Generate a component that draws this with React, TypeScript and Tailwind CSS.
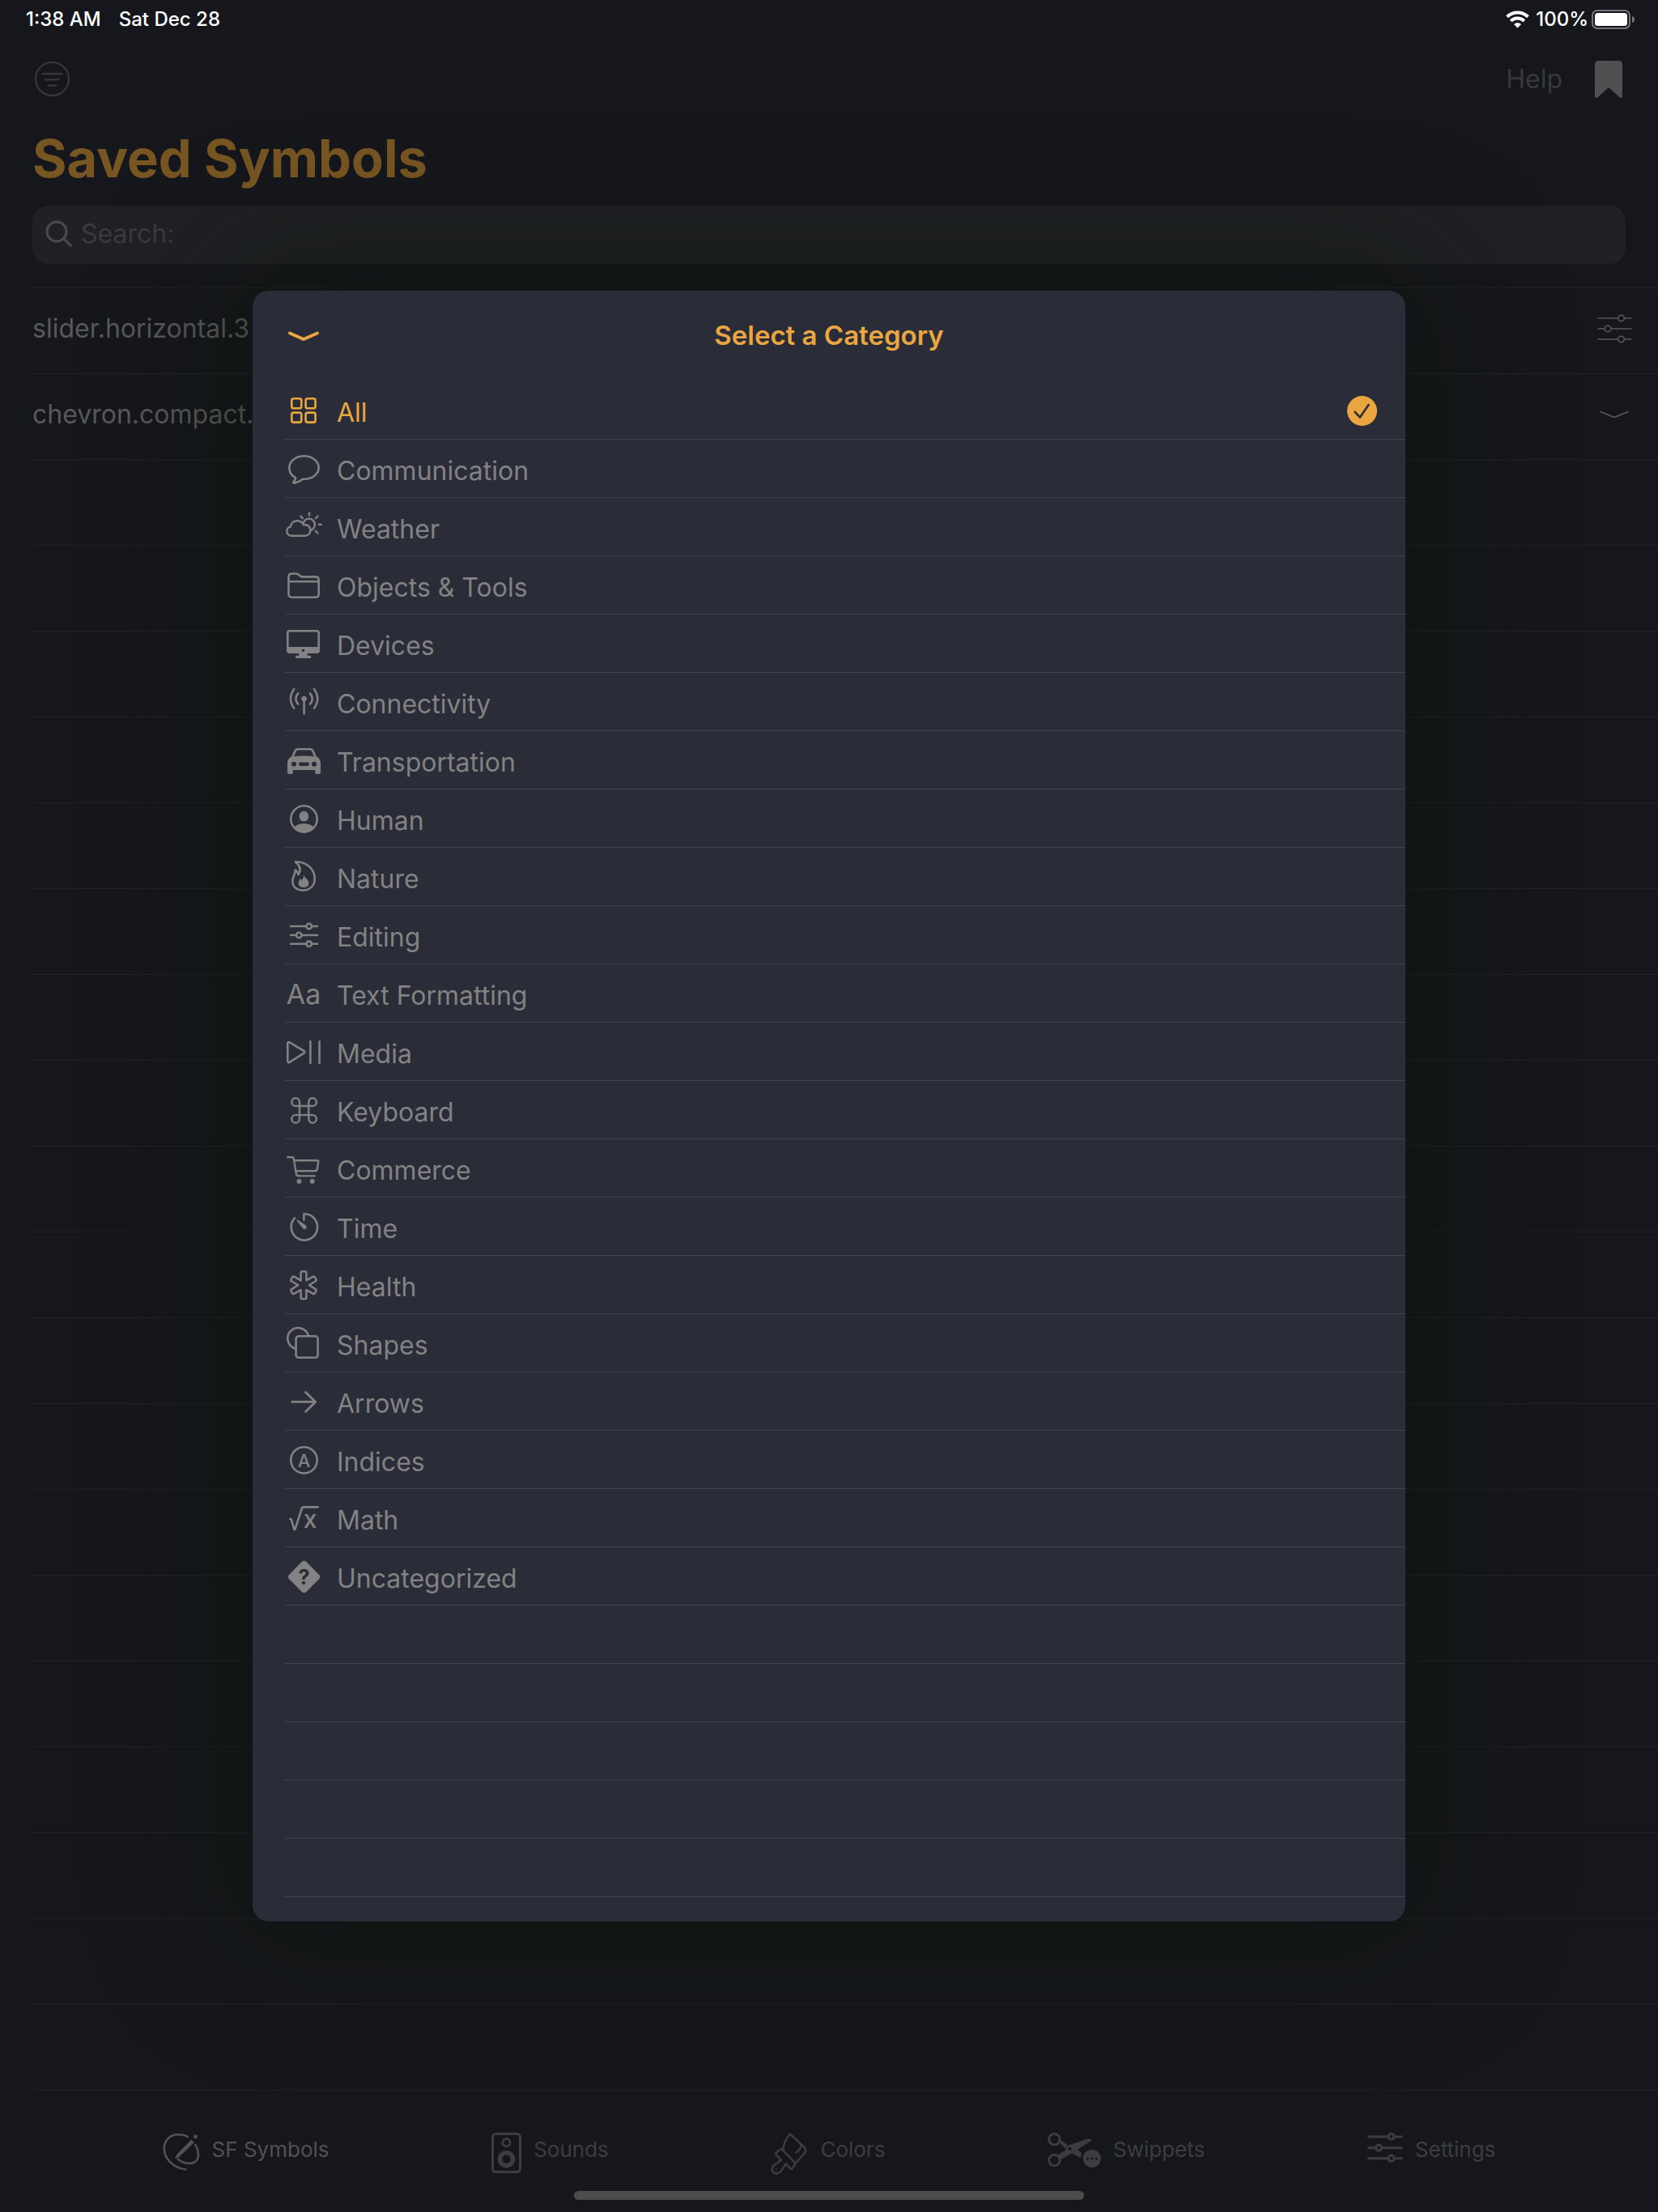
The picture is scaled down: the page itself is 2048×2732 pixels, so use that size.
import type { ReactNode } from 'react';

const stroke = {
  fill: 'none',
  stroke: 'currentColor',
  strokeWidth: 2.6,
  strokeLinecap: 'round' as const,
  strokeLinejoin: 'round' as const,
};

const categories: { name: string; icon: ReactNode }[] = [
  {
    name: 'All',
    icon: (
      <g {...stroke}>
        <rect x="8.3" y="6.3" width="12" height="12" rx="2.4" />
        <rect x="25.6" y="6.3" width="12" height="12" rx="2.4" />
        <rect x="8.3" y="23.6" width="12" height="12" rx="2.4" />
        <rect x="25.6" y="23.6" width="12" height="12" rx="2.4" />
      </g>
    ),
  },
  {
    name: 'Communication',
    icon: (
      <path
        {...stroke}
        d="M23.5 5.3C33.5 5.3 41.7 11.6 41.7 19.6S33.5 33.8 23.5 33.8h-1.6C19.4 35.7 15 38.3 11 38.6c-.8 0-.9-.7-.4-1.2 1.8-2 2.5-3.5 2.6-5.2C8.6 30 5.3 25.2 5.3 19.6 5.3 11.6 13.5 5.3 23.5 5.3Z"
      />
    ),
  },
  {
    name: 'Weather',
    icon: (
      <g {...stroke} strokeWidth="2.4">
        <path d="M8.2 31.8c-3.4 0-6-2.4-6-5.7 0-2.8 2-5 4.7-5.5C7.6 16 11 13.2 15.2 13.2c3.6 0 6.6 2.1 8 5.3.5-.2 1.2-.3 1.9-.3 3.6 0 6.4 3 6.4 6.7s-2.9 6.9-6.6 6.9Z" />
        <path d="M22.8 15.4A7.3 7.3 0 1 1 32.6 24.6" />
        <path d="M30 3.5v3M19.2 7.5l2.7 2.7M40.6 7.5l-2.7 2.7M41.8 17.7h3M37.9 25.8l2.7 2.7" />
      </g>
    ),
  },
  {
    name: 'Objects & Tools',
    icon: (
      <path
        {...stroke}
        d="M4.5 10.5c0-2.6 1.4-4 4-4h5.2c1.5 0 2.3.4 3.3 1.3l1.6 1.4c1 .9 1.8 1.2 3.3 1.2h15.8c2.6 0 4 1.4 4 4v17.3c0 2.6-1.4 4-4 4H8.5c-2.6 0-4-1.4-4-4ZM4.5 16.2h37.2"
      />
    ),
  },
  {
    name: 'Devices',
    icon: (
      <g fill="currentColor" fillRule="evenodd">
        <path d="M5.5 4h34C41.8 4 43 5.2 43 7.5v22c0 2.3-1.2 3.5-3.5 3.5h-34C3.2 33 2 31.8 2 29.5v-22C2 5.2 3.2 4 5.5 4ZM6 6.4c-.9 0-1.4.5-1.4 1.4V25h35.8V7.8c0-.9-.5-1.4-1.4-1.4ZM22.5 27.7a1.7 1.7 0 1 0 0 3.4 1.7 1.7 0 0 0 0-3.4Z" />
        <path d="M17.3 32.5h10.4v3.2h3c1 0 1.6.7 1.6 1.7s-.6 1.6-1.6 1.6H14.5c-1 0-1.6-.6-1.6-1.6s.6-1.7 1.6-1.7h2.8Z" />
      </g>
    ),
  },
  {
    name: 'Connectivity',
    icon: (
      <g {...stroke}>
        <circle cx="23.6" cy="17" r="3.2" fill="currentColor" stroke="none" />
        <path d="M23.6 18v17.5M16.2 10.3Q10.5 17 16.2 23.6M31 10.3Q36.7 17 31 23.6M11.2 5Q2.8 17 11.2 28.8M36 5Q44.4 17 36 28.8" />
      </g>
    ),
  },
  {
    name: 'Transportation',
    icon: (
      <path
        fill="currentColor"
        fillRule="evenodd"
        d="M8.2 16.3l2.8-6.7C12.1 7.1 13.6 6 16.5 6h14c2.9 0 4.4 1.1 5.5 3.6l2.8 6.7C42 18 44 20.5 44 24.5V36c0 1.3-.8 2-2 2h-2.8c-1.2 0-2-.8-2-2v-3H9.8v3c0 1.3-.8 2-2 2H5c-1.2 0-2-.7-2-2V24.5C3 20.5 5 18 8.2 16.3ZM11.2 16.2Q23.5 15 35.8 16.2l-2.3-5.5c-.7-1.5-1.5-2.2-3.1-2.2H16.6c-1.6 0-2.4.7-3.1 2.2ZM11 22.7a3 3 0 1 0 0 6 3 3 0 0 0 0-6ZM36 22.7a3 3 0 1 0 0 6 3 3 0 0 0 0-6ZM19.3 23.5a2.3 2.3 0 0 0 0 4.6h8.4a2.3 2.3 0 0 0 0-4.6Z"
      />
    ),
  },
  {
    name: 'Human',
    icon: (
      <g>
        <circle {...stroke} cx="23.5" cy="21.5" r="16.2" />
        <ellipse cx="23.4" cy="18.2" rx="5.8" ry="6.4" fill="currentColor" />
        <path
          fill="currentColor"
          d="M11 32.5C13.5 29 18 27.3 23.5 27.3S33.5 29 36 32.5A16.5 16.5 0 0 1 11 32.5Z"
        />
      </g>
    ),
  },
  {
    name: 'Nature',
    icon: (
      <g>
        <path
          {...stroke}
          d="M13 2.5C26 2 36.7 10.5 36.7 23.2c0 8.8-6 14.4-14.2 14.4S9.3 32.8 9.3 26.8c0-5.8 3-8 3.6-14.2 2 1.2 3 2.8 3.6 5.6 3.2-4.8 2.6-10.6-3.5-15.7Z"
        />
        <path
          fill="currentColor"
          d="M23.2 18.3c.6 4.3 6.2 5.6 6.2 10.4 0 3.3-2.7 5.4-6.3 5.4s-6.4-2.1-6.4-5.4c0-2.2 1.2-3.6 2.3-5.6.9.7 1.3 1.3 1.6 2.3 1.6-2 2.5-4.2 2.6-7.1Z"
        />
      </g>
    ),
  },
  {
    name: 'Editing',
    icon: (
      <g {...stroke}>
        <path d="M7 10h19.5M33 10h7M7 21h7M20.5 21H40M7 31.8h19.5M33 31.8h7" />
        <circle cx="29.7" cy="10" r="3.2" />
        <circle cx="17.3" cy="21" r="3.2" />
        <circle cx="29.7" cy="31.8" r="3.2" />
      </g>
    ),
  },
  {
    name: 'Text Formatting',
    icon: (
      <text x="23" y="34" fontSize="34" textAnchor="middle" fill="currentColor">
        Aa
      </text>
    ),
  },
  {
    name: 'Media',
    icon: (
      <g {...stroke}>
        <path d="M3.3 10.6c0-1.5 1.2-2 2.4-1.3l17.6 10.6c1.3.8 1.3 2.2 0 3L5.7 33.8c-1.2.7-2.4.2-2.4-1.3ZM31.4 8.3v26.6M42.6 8.3v26.6" />
      </g>
    ),
  },
  {
    name: 'Keyboard',
    icon: (
      <path
        {...stroke}
        strokeWidth="2.4"
        d="M18 16h-4.85A4.85 4.85 0 1 1 18 11.15V32a4.85 4.85 0 1 1-4.85-4.85H34.1A4.85 4.85 0 1 1 29.25 32V11.15A4.85 4.85 0 1 1 34.1 16Z"
      />
    ),
  },
  {
    name: 'Commerce',
    icon: (
      <g {...stroke} strokeWidth="2.4">
        <path d="M3.2 7.2H9c1 0 1.5.4 1.7 1.4l3 18.5c.3 2.2 1.4 3.3 3.4 3.3h19.6M11.3 11.2H40c1 0 1.5.6 1.3 1.6l-1.4 8.7c-.3 1.8-1.3 2.7-3.1 2.7H13.3" />
        <circle cx="17.5" cy="37" r="3" fill="currentColor" stroke="none" />
        <circle cx="33.7" cy="37" r="3" fill="currentColor" stroke="none" />
      </g>
    ),
  },
  {
    name: 'Time',
    icon: (
      <g>
        <path {...stroke} d="M23.4 12.8V5.3A16.2 16.2 0 1 1 12.1 10.4" />
        <path
          fill="currentColor"
          d="M15.8 12.7l9.5 6.2c1.6 1.1 2 2.9.9 4.3s-3 1.4-4.3-.1l-7.1-9.3c-.5-.8.1-1.5 1-1.1Z"
        />
      </g>
    ),
  },
  {
    name: 'Health',
    icon: (
      <path
        {...stroke}
        strokeWidth="2.5"
        d="M19.6 6.3q0-2 2-2h2.8q2 0 2 2v9.1l7.9-4.5q1.7-1 2.7.7l1.3 2.2q1 1.7-.7 2.7L29.8 21.3l7.8 4.8q1.7 1 .7 2.7L37 31q-1 1.7-2.7.7l-7.9-4.5v9.1q0 2-2 2h-2.8q-2 0-2-2v-9.1l-7.9 4.5Q10 32.7 9 31l-1.3-2.2q-1-1.7.7-2.7l7.8-4.8-7.8-4.8q-1.7-1-.7-2.7L9 11.6q1-1.7 2.7-.7l7.9 4.5Z"
      />
    ),
  },
  {
    name: 'Shapes',
    icon: (
      <g {...stroke}>
        <rect x="13.6" y="12.3" width="27" height="26.5" rx="3.4" />
        <path d="M28.7 11A13 13 0 1 0 12.3 27.4" />
      </g>
    ),
  },
  {
    name: 'Arrows',
    icon: <path {...stroke} strokeWidth="2.8" d="M8.8 21.4H37.5M25.5 9.5L37.7 21.4L25.5 33.5" />,
  },
  {
    name: 'Indices',
    icon: (
      <g>
        <circle {...stroke} cx="23.5" cy="21.4" r="16.2" />
        <text x="23.5" y="29.5" fontSize="22" fontWeight="500" textAnchor="middle" fill="currentColor">
          A
        </text>
      </g>
    ),
  },
  {
    name: 'Math',
    icon: (
      <g>
        <path {...stroke} d="M6.2 22l1.6.6 3.6 12.4h1L21 8.6q.4-1.2 1.7-1.2h18" />
        <text x="31" y="33" fontSize="30" fontWeight="500" textAnchor="middle" fill="currentColor">
          x
        </text>
      </g>
    ),
  },
  {
    name: 'Uncategorized',
    icon: (
      <g>
        <rect
          x="8.6"
          y="6.5"
          width="30"
          height="30"
          rx="4"
          fill="currentColor"
          transform="rotate(45 23.6 21.5)"
        />
        <text x="23.6" y="30.5" fontSize="25" fontWeight="700" textAnchor="middle" fill="#2a2c37">
          ?
        </text>
      </g>
    ),
  },
];

const tabs: { name: string; width: number; height: number; active?: boolean; icon: ReactNode }[] = [
  {
    name: 'SF Symbols',
    width: 46,
    height: 48,
    active: true,
    icon: (
      <g {...stroke}>
        <path d="M31 5.2C28 3.3 23.5 2.3 18.5 2.3 8 2.8 1.7 10 1.7 19.5c0 12 11.3 24.5 26.3 25.8" />
        <path d="M40.3 15c2.6 4 4 9 3.6 14.2-.4 5-4.5 8.6-10.3 8.7-5.4.1-10.5-1.7-14.6-5" />
        <path fill="currentColor" stroke="none" d="M15.4 31.3l1.8-4.4L35.5 8.4l3.5 3.5-18.7 18.3-4.2 1.7q-.8.2-.7-.6Z" />
        <circle cx="40.5" cy="5" r="2.4" fill="currentColor" stroke="none" />
      </g>
    ),
  },
  {
    name: 'Sounds',
    width: 37,
    height: 50,
    icon: (
      <g {...stroke}>
        <rect x="1.5" y="1.5" width="34" height="47" rx="4" strokeWidth="3" />
        <circle cx="18.5" cy="12.3" r="4.6" strokeWidth="2.8" />
        <circle cx="18.5" cy="32.7" r="8" strokeWidth="5.6" />
      </g>
    ),
  },
  {
    name: 'Colors',
    width: 46,
    height: 52,
    icon: (
      <g {...stroke} strokeWidth="2.5">
        <path d="M15.2 20.5C16.2 13 19.5 6.5 23.8 1.5L40 16.5c3.5 3.4 4 5.5 2.5 8L30.5 38" />
        <path d="M37.5 14.5c.3 4.5-1.5 7-6 9.8" />
        <path d="M11 21.3l2.5-1.3L30.2 37.5v1.6l-4 5.8h-1.2L19 38.5l-6.5 9c-2.5 3.2-6.5 4-9 1.8-2.6-2.3-2.5-6.3.4-8.8L13 33.8 6.5 27q-.8-1 0-2Z" />
        <circle cx="6.8" cy="44.8" r="1.2" fill="currentColor" stroke="none" />
      </g>
    ),
  },
  {
    name: 'Swippets',
    width: 66,
    height: 44,
    icon: (
      <g fill="currentColor">
        <circle {...stroke} cx="8.4" cy="8.3" r="6.8" strokeWidth="3" />
        <circle {...stroke} cx="8.4" cy="34" r="6.8" strokeWidth="3" />
        <path d="M14 11.5l3.2-1.8L25 15.8 21.5 19.5ZM30.2 25.5l7-4.2L42 25.5q-1.5 3-.5 6Z" />
        <path
          fillRule="evenodd"
          d="M13 27l9.5-5.5c.3-3.2 1.3-4.5 3.8-6L48 7.9c3-.9 5.5-.4 7.4 1L31.5 24.5 16.5 33ZM27.5 18a2 2 0 1 0 0 4 2 2 0 0 0 0-4Z"
        />
        <path
          fillRule="evenodd"
          d="M54.8 21a11 11 0 1 0 0 22 11 11 0 0 0 0-22ZM49.3 30.5a1.6 1.6 0 1 1 0 3.2 1.6 1.6 0 0 1 0-3.2ZM54.8 30.5a1.6 1.6 0 1 1 0 3.2 1.6 1.6 0 0 1 0-3.2ZM60.3 30.5a1.6 1.6 0 1 1 0 3.2 1.6 1.6 0 0 1 0-3.2Z"
        />
      </g>
    ),
  },
  {
    name: 'Settings',
    width: 44,
    height: 38,
    icon: (
      <g {...stroke} strokeWidth="3">
        <path d="M1.5 5H25M34 5h8M1.5 18.7h8M18.5 18.7H42M1.5 31.8H25M34 31.8h8" />
        <circle cx="29.5" cy="5" r="3.6" />
        <circle cx="14" cy="18.7" r="3.6" />
        <circle cx="29.5" cy="31.8" r="3.6" />
      </g>
    ),
  },
];

const StatusBar = () => {
  return (
    <div className="flex h-12 items-center justify-between pl-8 pr-7 text-2xl font-medium text-white">
      <div className="flex gap-[22px]">
        <span>1:38 AM</span>
        <span>Sat Dec 28</span>
      </div>
      <div className="flex items-center gap-2">
        <svg width="29" height="22" viewBox="0 0 29 22" fill="none" stroke="#fff" strokeWidth="4">
          <path d="M1.6 7.8C8.8.8 20.2.8 27.4 7.8" />
          <path d="M6.2 12.9c4.7-4.5 11.9-4.5 16.6 0" />
          <path d="M10 17c2.6-2.4 6.4-2.4 9 0l-4.5 4.4Z" fill="#fff" stroke="none" />
        </svg>
        <div className="flex items-center gap-1">
          <span>100%</span>
          <svg width="54" height="24" viewBox="0 0 54 24">
            <rect x="1" y="1" width="46" height="22" rx="6" fill="none" stroke="#77777b" strokeWidth="2" />
            <rect x="4" y="4" width="40" height="16" rx="3.5" fill="#fff" />
            <path d="M50 8q3 1 3 4t-3 4Z" fill="#77777b" />
          </svg>
        </div>
      </div>
    </div>
  );
};

const SavedRow = ({ name, children }: { name: string; children: ReactNode }) => {
  return (
    <li className="flex h-[106px] items-center justify-between border-b border-[#202225] pb-1.5 pr-8 text-[32px] text-[#58595b]">
      <span>{name}</span>
      {children}
    </li>
  );
};

const CategoryModal = () => {
  return (
    <div className="absolute inset-0 flex items-center justify-center">
      <div
        role="dialog"
        aria-label="Select a Category"
        className="w-[1424px] max-w-[90%] overflow-hidden rounded-[20px] bg-[#2a2c37] pb-[30px] shadow-[0_0_160px_40px_rgba(8,17,2,0.4)]"
      >
        <div className="grid h-28 grid-cols-[46px_1fr_46px] items-center px-10 text-[#eaa640]">
          <button aria-label="Close">
            <svg width="46" height="44" viewBox="0 0 46 44">
              <path {...stroke} strokeWidth="4" d="M6 18.5L23 26L40 18.5" />
            </svg>
          </button>
          <h2 className="text-center text-[33px] font-semibold">Select a Category</h2>
        </div>
        <ul className="pl-10">
          {categories.map((item, i) => (
            <li key={item.name} className="h-[72px] border-b border-[#40424b]">
              <button
                className={`flex h-full w-full items-center gap-[18px] pr-[35px] pt-[3px] text-[32px] ${
                  i === 0 ? 'text-[#eaa640]' : 'text-[#828282]'
                }`}
              >
                <svg width="46" height="44" viewBox="0 0 46 44" aria-hidden="true">
                  {item.icon}
                </svg>
                <span className="pt-[3px]">{item.name}</span>
                {i === 0 && (
                  <svg className="ml-auto" width="37" height="38" viewBox="0 0 37 38" aria-hidden="true">
                    <circle cx="18.5" cy="18.5" r="18.5" fill="currentColor" />
                    <path {...stroke} stroke="#2a2c37" d="M9.8 19.8L15.8 26.5L26.5 11" />
                  </svg>
                )}
              </button>
            </li>
          ))}
          {[...Array(5)].map((_, i) => (
            <li key={i} aria-hidden="true" className="h-[72px] border-b border-[#40424b]" />
          ))}
        </ul>
      </div>
    </div>
  );
};

const App = () => {
  return (
    <div className="relative flex min-h-screen flex-col bg-[#16171c] font-[Inter,'Liberation_Sans',sans-serif]">
      <StatusBar />

      <header className="px-10">
        <div className="flex h-[100px] items-center justify-between pr-1">
          <button aria-label="Filter" className="text-[#37383a]">
            <svg width="48" height="44" viewBox="0 0 48 44" {...stroke} strokeWidth="2.2">
              <circle cx="24.5" cy="21.5" r="20.5" />
              <path d="M12.5 15.2h24M16 22.4h17M19.5 29.7h10" />
            </svg>
          </button>
          <div className="flex items-center gap-10">
            <a href="#help" className="text-[32px] text-[#37383a]">
              Help
            </a>
            <button aria-label="Saved" className="text-[#505052]">
              <svg width="34" height="46" viewBox="0 0 34 46" fill="currentColor">
                <path d="M5 0h24q5 0 5 5v38.5q0 3.5-3 2L17 33 3 45.5q-3 1.5-3-2V5q0-5 5-5Z" />
              </svg>
            </button>
          </div>
        </div>
        <h1 className="mt-2 text-[65px] font-bold leading-[80px] text-[#785622]">Saved Symbols</h1>
        <label className="mt-[18px] flex h-[72px] items-center gap-[10px] rounded-[20px] bg-[#202125] px-4 pb-0.5">
          <svg width="34" height="34" viewBox="0 0 34 34" className="text-[#4a4b4e]" {...stroke} strokeWidth="3">
            <circle cx="14" cy="14" r="12" />
            <path d="M23 23l8.5 8.5" />
          </svg>
          <input
            aria-label="Search"
            placeholder="Search:"
            className="flex-1 bg-transparent text-[32px] outline-none placeholder:text-[#3a3b3c]"
          />
        </label>
      </header>

      <ul className="ml-10 mt-[29px] border-t border-[#202225]">
        <SavedRow name="slider.horizontal.3">
          <svg width="44" height="36" viewBox="0 0 44 36" {...stroke} strokeWidth="1.5">
            <path d="M2 5h24.500M34.500 5H43M2 18h8M18 18h25M2 31h24.500M34.500 31H43" />
            <circle cx="30.5" cy="5" r="3.8" />
            <circle cx="14" cy="18" r="3.8" />
            <circle cx="30.5" cy="31" r="3.8" />
          </svg>
        </SavedRow>
        <SavedRow name="chevron.compact.down">
          <svg width="44" height="36" viewBox="0 0 44 36" {...stroke} strokeWidth="1.6">
            <path d="M5 14.5L22 21.5L39 14.5" />
          </svg>
        </SavedRow>
        {[...Array(19)].map((_, i) => (
          <li key={i} aria-hidden="true" className="h-[106px] border-b border-[#202225]" />
        ))}
      </ul>

      <nav className="flex h-[102px] items-start justify-evenly pt-[52px]">
        {tabs.map((tab) => (
          <button
            key={tab.name}
            className={`flex items-start gap-[15px] text-[26px] leading-[42px] ${
              tab.active ? 'text-[#515153]' : 'text-[#3c3d3f]'
            }`}
          >
            <svg
              width={tab.width}
              height={tab.height}
              viewBox={`0 0 ${tab.width} ${tab.height}`}
              aria-hidden="true"
            >
              {tab.icon}
            </svg>
            <span>{tab.name}</span>
          </button>
        ))}
      </nav>
      <div className="mx-auto mb-[14px] mt-[22px] h-[11px] w-[630px] rounded-full bg-[#4c4c4c]" />

      <CategoryModal />
    </div>
  );
};

export default App;
